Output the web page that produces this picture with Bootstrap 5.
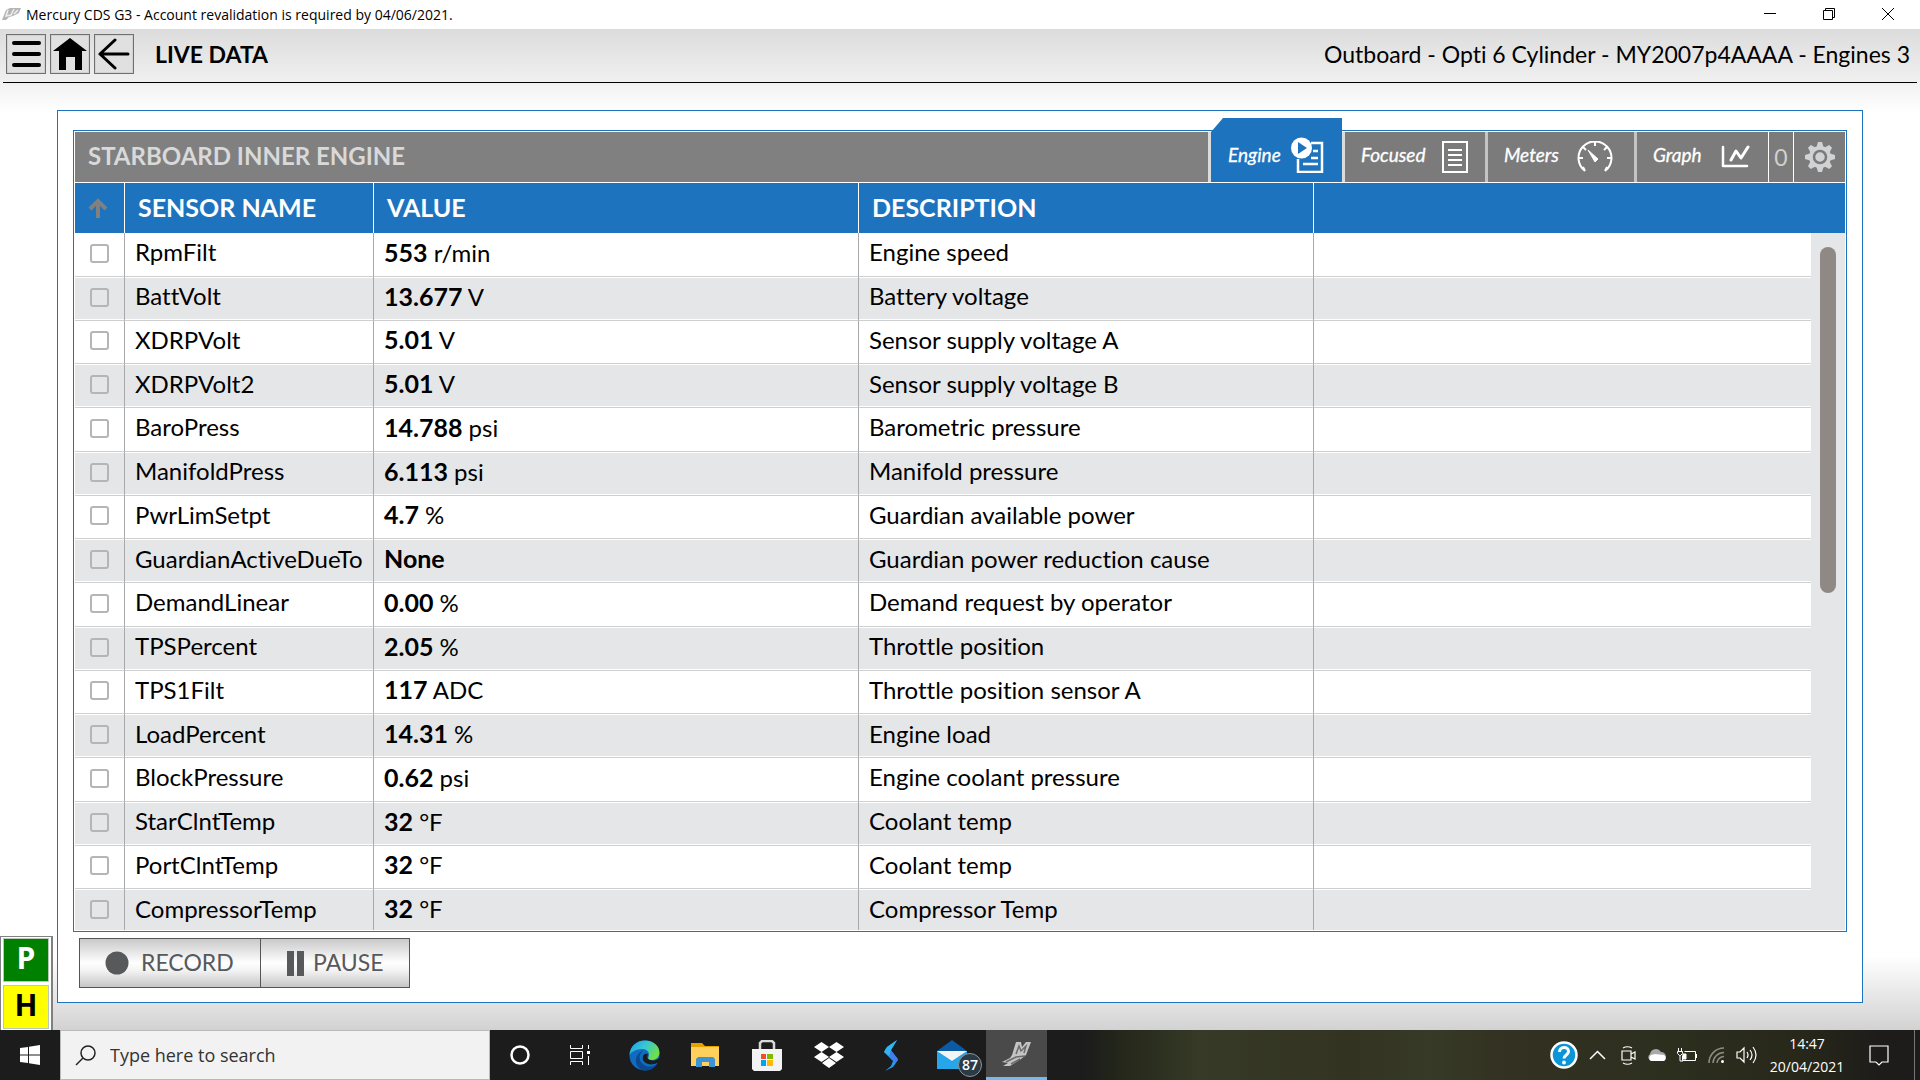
<!DOCTYPE html>
<html lang="en">
<head>
<meta charset="utf-8">
<meta name="viewport" content="width=device-width, initial-scale=1">
<title>Mercury CDS G3 - Live Data</title>
<link href="https://cdn.jsdelivr.net/npm/bootstrap@5.3.0/dist/css/bootstrap.min.css" rel="stylesheet">
<style>
:root{--blue:#1e73be;--bar:#7b7b7b;--segoe:"Open Sans","Noto Sans",sans-serif}
html,body{height:100%}
body{font-family:Lato,"Open Sans",sans-serif;font-size:24px;line-height:32px;color:#000;font-variant-ligatures:none;overflow:hidden}
button{font-family:inherit}
svg{display:block;flex:none}
.plain{border:0;background:none;padding:0;color:inherit}
.titlebar{height:29px;font:14px/29px var(--segoe);padding:0 3px 0 2px}
.titlebar .plain{width:59px;height:28px;display:flex;align-items:center;justify-content:center}
.stage{background:linear-gradient(#dcdcdc 0,#f0f0f0 53px,#fff 82px,#fff calc(100% - 74px),#d2d2d2 100%)}
.app-head{height:54px;font-size:23px;margin:0 3px;padding:0 7px 4px 3px;border-bottom:1px solid #000}
.app-head h1{font-size:23px;font-weight:700;line-height:32px;margin-left:21px}
.sq{width:40px;height:40px;border:1px solid #6f6f6f;background:#e0e0e0;box-shadow:inset 0 0 0 1px #d2d2d2;padding:0;display:flex;align-items:center;justify-content:center}
.outer{margin:27px 57px 27px;border:1px solid var(--blue);background:#fff;padding:19px 15px 14px}
.inner{border:1px solid var(--blue);padding:1px}
.engine-bar{height:51px;background:#808080;border-bottom:1px solid #fff}
.engine-bar h2{font-size:24px;font-weight:700;color:#d9d9d9;margin:0;padding:0 0 2px 13px}
.view-tab{height:50px;border:0;border-right:3px solid #c4c4c4;background:var(--bar);color:#fff;font-size:19px;font-style:italic;font-weight:400;display:flex;align-items:center;padding:0 0 5px 16px;-webkit-text-stroke:.3px #fff}
.view-tab svg{margin-top:4px}
.view-tab.on{height:64px;margin-top:-14px;background:var(--blue);border-right:0;clip-path:polygon(12px 0,100% 0,100% 100%,0 100%,0 14px);padding:9px 0 0 17px;width:131px}
.view-tab.on svg{margin:0 0 0 10px}
.edge{width:3px;background:#dcdcdc}
.count{width:26px;background:var(--bar);border-right:1px solid #fff;border-left:1px solid #fff;color:#d0d0d0;font-size:23px;margin-left:-3px}
.gear{width:51px;background:var(--bar);display:flex;align-items:center;justify-content:center}
.viewport{overflow:hidden;min-height:0}
.sensors{height:calc(100% + 3px);table-layout:fixed;width:100%;border-collapse:separate;border-spacing:0}
.sensors th{height:50px;background:var(--blue);color:#fff;font-size:25px;font-weight:700;padding:0 0 2px 13px;border-right:1px solid #fff}
.sensors td{padding:0 0 4px 10px;border-right:1px solid #a9a9a9;border-bottom:1px solid #cfcfcf;white-space:nowrap}
.sensors tr>:last-child{border-right:0}
.sensors tbody tr:nth-child(even) td{background:#e5e6e8;box-shadow:inset 0 1px #fff,inset 0 -1px #fff}
.sensors td b{font-size:25px}
.sensors td:first-child,.sensors th:first-child{padding-left:0}
.sensors td:first-child{padding-bottom:2px}
.sensors th:first-child svg{margin:2px auto 0 13px}
.tick{appearance:none;display:block;width:19px;height:19px;margin:0 0 0 15px;border:2px solid #b5b5b5;border-radius:3px;background:transparent}
.tick:checked{background:var(--blue)}
.track{flex:none;width:34px;background:#e5e6e8;border-top:50px solid var(--blue);padding:14px 9px 0 9px}
.thumb{height:346px;background:#8f8885;border-radius:8px}
.rec-bar{padding:6px 0 0 6px}
.rec{height:50px;border:1px solid #555;color:#58595b;font-size:23px;background:linear-gradient(#c9c9c9,#fff 50%,#f4f4f4 65%,#c6c6c6);display:flex;align-items:center;padding:0 0 2px}
.rec+.rec{margin-left:-1px}
.rec svg{margin-top:2px}
.gears{left:0;bottom:0;width:53px;height:94px;background:#fff;border:solid #808080;border-width:1px 2px 0 1px;padding:1px 2px 1px;font:700 30px/38px var(--segoe);gap:3px}
.gears div{flex:1;text-align:center;border:1px solid #b9c9b9}
.park{background:#008000;color:#fff}
.helm{background:#ff0}
.taskbar{height:50px;color:#fff;font-family:var(--segoe);background:linear-gradient(90deg,#1c1c1c 0,#1c1c1c 1085px,#24271a 1120px,#363a26 1200px,#333322 1350px,#363a26 1430px,#333122 1510px,#2d2f1f 1650px,#27281a 1800px,#1d1c1a 1880px)}
.taskbar .plain{height:50px;display:flex;align-items:center;justify-content:center}
.find{width:430px;background:#f2f2f2;border:1px solid #b9b9b9;padding-left:14px}
.find input{border:0;background:none;outline:0;color:#333;font-size:18px;line-height:24px;width:300px;padding:0;margin-left:14px}
.find input::placeholder{color:#333;opacity:1}
.taskbar .t60{width:60px}
.taskbar .t62{width:62px}
.taskbar .tile{width:61px;background:#4b4a4b;border-bottom:3px solid #76b9ed}
.bubble{right:0;top:23px;width:24px;height:24px;border-radius:12px;border:1px solid #8f9498;background:#2a3b46;font-size:14px;font-weight:600;line-height:21px;text-align:center}
.tray{gap:11px}
.clock{font-size:14px;line-height:23px;width:76px;text-align:center}
.taskbar .note{width:46px;margin-right:12px}
.peek{border-left:1px solid #777;width:6px}
</style>
<script src="https://cdn.jsdelivr.net/npm/bootstrap@5.3.0/dist/js/bootstrap.bundle.min.js"></script>
</head>
<body class="d-flex flex-column">

<header class="titlebar d-flex align-items-start bg-white">
  <svg class="mt-2" width="20" height="13" viewBox="0 0 20 13"><path d="M0 12 4 2 8 0h11l-2 5-6 3-4 1-3 3z" fill="#b5b5b5"/><path d="M6 2 4 8 9 7l3-6M12 6l4-4" stroke="#eee" fill="none" stroke-width="1.5"/></svg>
  <span class="ms-1">Mercury CDS G3 - Account revalidation is required by 04/06/2021.</span>
  <div class="d-flex ms-auto">
    <button class="plain" aria-label="Minimize"><svg width="12" height="12"><path d="M0 5.500h12" stroke="#000"/></svg></button>
    <button class="plain" aria-label="Restore"><svg width="12" height="12" fill="none" stroke="#000"><path d="M.5 2.500h9v9h-9zM2.500 2.500v-2h9v9h-2"/></svg></button>
    <button class="plain" aria-label="Close"><svg width="12" height="12" stroke="#000"><path d="M0 0l12 12M12 0 0 12"/></svg></button>
  </div>
</header>

<main class="stage flex-fill d-flex flex-column position-relative">
  <div class="app-head d-flex align-items-center">
    <div class="d-flex gap-1">
      <button class="sq" aria-label="Menu"><svg width="30" height="28" stroke="#000" stroke-width="4" stroke-linecap="round"><path d="M3 3h25M3 14h25M3 25h25"/></svg></button>
      <button class="sq" aria-label="Home"><svg width="36" height="34" viewBox="0 0 36 34"><path d="M18 1 35 14H30V33H23V20H14V33H7V14H1Z"/></svg></button>
      <button class="sq" aria-label="Back"><svg width="32" height="34" fill="none" stroke="#000" stroke-width="3" stroke-linecap="round" stroke-linejoin="round"><path d="M17 3 2 17 17 31M2 17h28"/></svg></button>
    </div>
    <h1 class="mb-0">LIVE DATA</h1>
    <span class="ms-auto">Outboard - Opti 6 Cylinder - MY2007p4AAAA - Engines 3</span>
  </div>

  <section class="outer flex-fill d-flex flex-column">
    <div class="inner flex-fill d-flex flex-column">
      <div class="engine-bar d-flex">
        <h2 class="flex-fill align-self-center">STARBOARD INNER ENGINE</h2>
        <span class="edge"></span>
        <button class="view-tab on">Engine
          <svg width="33" height="36" viewBox="0 0 33 36" fill="none"><path d="M20 6h11v29H7V22" stroke="#fff" stroke-width="2.500"/><path d="M22 14h5M20 21h7M12 27h15" stroke="#fff" stroke-width="2.500"/><circle cx="10.500" cy="11" r="10.500" fill="#fff"/><path d="M7 5v12l9-6z" fill="#1e73be"/></svg>
        </button>
        <span class="edge"></span>
        <button class="view-tab" style="width:143px">Focused
          <svg class="ms-3" width="26" height="32" fill="none" stroke="#fff" stroke-width="2"><path d="M1 1h24v30H1zM6 9h14M6 14h14M6 19h14M6 24h14"/></svg>
        </button>
        <button class="view-tab" style="width:149px">Meters
          <svg class="ms-3" width="40" height="32" viewBox="-1 0 40 32" fill="none" stroke="#fff" stroke-width="2"><path d="M9 30A16.500 16.500 0 1 1 29 30M19 1v4M7 6l3 3M31 6l-3 3M2 17h5M36 17h-5M9 30l-2-4M29 30l2-4"/><path d="M12 9 22 18 19 21Z" fill="#fff" stroke-width="1"/></svg>
        </button>
        <button class="view-tab" style="width:134px">Graph
          <svg class="ms-3" width="34" height="24" viewBox="-3 0 34 24" fill="none" stroke="#fff" stroke-width="3" stroke-linecap="round" stroke-linejoin="round"><path d="M2 2v19h24" stroke-width="2.500"/><path d="M10 15l5-9 5 7 7-11"/></svg>
        </button>
        <span class="count d-flex align-items-center justify-content-center">0</span>
        <button class="plain gear" aria-label="Settings"><svg width="32" height="32" viewBox="-16 -16 32 32"><g fill="#d0d2d3"><circle r="11"/><g id="teeth"><path d="M-3.500-10-2-15H2L3.500-10ZM-3.500 10-2 15H2L3.500 10ZM-10-3.500-15-2V2L-10 3.500ZM10-3.500 15-2V2L10 3.500Z"/></g><use href="#teeth" transform="rotate(45)"/></g><circle r="6" fill="none" stroke="#7b7b7b" stroke-width="2.500"/></svg></button>
      </div>
      <div class="viewport flex-fill d-flex">
        <div class="flex-fill h-100">
        <table class="sensors">
          <colgroup><col style="width:50px"><col style="width:249px"><col style="width:485px"><col style="width:455px"><col></colgroup>
          <thead><tr><th aria-label="Sort"><svg width="20" height="22" fill="none" stroke="#808080" stroke-width="4"><path d="M10 21V4M2 12l8-8 8 8"/></svg></th><th>SENSOR NAME</th><th>VALUE</th><th>DESCRIPTION</th><th></th></tr></thead>
          <tbody>
            <tr><td><input type="checkbox" class="tick" aria-label="RpmFilt"></td><td>RpmFilt</td><td><b>553</b> r/min</td><td>Engine speed</td><td></td></tr>
            <tr><td><input type="checkbox" class="tick" aria-label="BattVolt"></td><td>BattVolt</td><td><b>13.677</b> V</td><td>Battery voltage</td><td></td></tr>
            <tr><td><input type="checkbox" class="tick" aria-label="XDRPVolt"></td><td>XDRPVolt</td><td><b>5.01</b> V</td><td>Sensor supply voltage A</td><td></td></tr>
            <tr><td><input type="checkbox" class="tick" aria-label="XDRPVolt2"></td><td>XDRPVolt2</td><td><b>5.01</b> V</td><td>Sensor supply voltage B</td><td></td></tr>
            <tr><td><input type="checkbox" class="tick" aria-label="BaroPress"></td><td>BaroPress</td><td><b>14.788</b> psi</td><td>Barometric pressure</td><td></td></tr>
            <tr><td><input type="checkbox" class="tick" aria-label="ManifoldPress"></td><td>ManifoldPress</td><td><b>6.113</b> psi</td><td>Manifold pressure</td><td></td></tr>
            <tr><td><input type="checkbox" class="tick" aria-label="PwrLimSetpt"></td><td>PwrLimSetpt</td><td><b>4.7</b> %</td><td>Guardian available power</td><td></td></tr>
            <tr><td><input type="checkbox" class="tick" aria-label="GuardianActiveDueTo"></td><td>GuardianActiveDueTo</td><td><b>None</b></td><td>Guardian power reduction cause</td><td></td></tr>
            <tr><td><input type="checkbox" class="tick" aria-label="DemandLinear"></td><td>DemandLinear</td><td><b>0.00</b> %</td><td>Demand request by operator</td><td></td></tr>
            <tr><td><input type="checkbox" class="tick" aria-label="TPSPercent"></td><td>TPSPercent</td><td><b>2.05</b> %</td><td>Throttle position</td><td></td></tr>
            <tr><td><input type="checkbox" class="tick" aria-label="TPS1Filt"></td><td>TPS1Filt</td><td><b>117</b> ADC</td><td>Throttle position sensor A</td><td></td></tr>
            <tr><td><input type="checkbox" class="tick" aria-label="LoadPercent"></td><td>LoadPercent</td><td><b>14.31</b> %</td><td>Engine load</td><td></td></tr>
            <tr><td><input type="checkbox" class="tick" aria-label="BlockPressure"></td><td>BlockPressure</td><td><b>0.62</b> psi</td><td>Engine coolant pressure</td><td></td></tr>
            <tr><td><input type="checkbox" class="tick" aria-label="StarClntTemp"></td><td>StarClntTemp</td><td><b>32</b> °F</td><td>Coolant temp</td><td></td></tr>
            <tr><td><input type="checkbox" class="tick" aria-label="PortClntTemp"></td><td>PortClntTemp</td><td><b>32</b> °F</td><td>Coolant temp</td><td></td></tr>
            <tr><td><input type="checkbox" class="tick" aria-label="CompressorTemp"></td><td>CompressorTemp</td><td><b>32</b> °F</td><td>Compressor Temp</td><td></td></tr>
          </tbody>
        </table>
        </div>
        <div class="track"><div class="thumb"></div></div>
      </div>
    </div>
    <div class="rec-bar d-flex">
      <button class="rec" style="width:182px"><svg class="ms-4" width="25" height="24"><circle cx="13" cy="12" r="11.500" fill="#58595b"/></svg><span class="ms-2 ps-1">RECORD</span></button>
      <button class="rec" style="width:150px"><svg class="ms-4" width="20" height="25" fill="#58595b"><path d="M2 0h7v25H2zM12 0h7v25h-7z"/></svg><span class="ms-2">PAUSE</span></button>
    </div>
  </section>

  <aside class="gears position-absolute d-flex flex-column">
    <div class="park">P</div>
    <div class="helm">H</div>
  </aside>
</main>

<footer class="taskbar d-flex">
  <button class="plain t60" aria-label="Start"><svg width="20" height="20" fill="#fff"><path d="M0 3l8-1v7.500H0zM9 1.800 20 0v9.500H9zM0 10.500h8V18l-8-1zM9 10.500h11V20L9 18.200z"/></svg></button>
  <label class="find d-flex align-items-center"><svg width="21" height="21" fill="none" stroke="#222" stroke-width="1.500"><circle cx="13" cy="8" r="7"/><path d="M8 13 1 20"/></svg><input type="text" placeholder="Type here to search" aria-label="Search"></label>
  <button class="plain t60" aria-label="Cortana"><svg width="22" height="22"><circle cx="11" cy="11" r="8.500" fill="none" stroke="#fff" stroke-width="2.500"/></svg></button>
  <button class="plain t60" aria-label="Task view"><svg width="20" height="20" fill="none" stroke="#fff"><path d="M.5 0v3.500h12V0M.5 6.500h12v7H.5zM.5 20v-3.500h12V20M18.500 0v4M18.500 11v9"/><path d="M17 6h3v3h-3z" fill="#fff" stroke="none"/></svg></button>
  <button class="plain t60 ms-1" aria-label="Edge"><svg width="31" height="31" viewBox="0 0 31 31"><defs><linearGradient id="eg" x1="0" y1="0" x2="1" y2=".5"><stop offset="0" stop-color="#1b9de2"/><stop offset=".5" stop-color="#35c5d8"/><stop offset="1" stop-color="#6fe04a"/></linearGradient></defs><circle cx="15.500" cy="15.500" r="15" fill="#0f6cc0"/><path d="M.5 15C1 5 9 .5 16 .5c9 0 14.500 6 14.500 12 0 5-4 7.500-8 7.500-3 0-4-1-3-3 2-5-2-8-6-8C7 9 2 12 .5 15z" fill="url(#eg)"/><path d="M14 11c-5 3-5 12 3 15 4 1.500 8 0 11-2-3 5-8 7-13 6.500C8 29 5 22 8 16c1.500-3 4-4.500 6-5z" fill="#0b4a92"/><path d="M19 14c-4-1-6 2-5 6 2 4 8 6 14 3l3 0v-6c-2 3-6 4-10 3-3-1-3-3-2-6z" fill="#1c1c1c"/></svg></button>
  <button class="plain t62" aria-label="File Explorer"><svg width="29" height="24"><path d="M0 0h11l3 3h14v20H0z" fill="#e6a100"/><path d="M0 4h28v19H0z" fill="#ffd05b"/><path d="M5 24v-8l2-2h15l2 2v8h-6v-5h-7v5z" fill="#3b93d8"/></svg></button>
  <button class="plain t62" aria-label="Microsoft Store"><svg width="30" height="31"><path d="M8 10V3l2-2h10l2 2v7" fill="none" stroke="#d8d8d8" stroke-width="2.500"/><path d="M0 9h30v20l-2 2H2l-2-2z" fill="#f3f3f3"/><path d="M9 14h5v5H9z" fill="#f25022"/><path d="M15 14h6v5h-6z" fill="#7fba00"/><path d="M9 20h5v6H9z" fill="#00a4ef"/><path d="M15 20h6v6h-6z" fill="#ffb900"/></svg></button>
  <button class="plain t62" aria-label="Dropbox"><svg width="30" height="26" fill="#fff"><path d="M7.500 0 15 5l-7.500 5L0 5zM22.500 0 30 5l-7.500 5L15 5zM7.500 10 15 15l-7.500 5L0 15zM22.500 10 30 15l-7.500 5L15 15zM15 16l7 5-7 5-7-5z"/></svg></button>
  <button class="plain t62" aria-label="Streaks"><svg width="16" height="31"><path d="M14 0 4 7 1 12l9 9-2 5-6 5 8-4 5-7-7-10z" fill="#249ae8"/><path d="M2 9l4-1 9 11-3 4z" fill="#3f7df0"/><path d="M14 0 4 7l-3 5 5 4 2-6z" fill="#2fb6f3"/></svg></button>
  <button class="plain t60 position-relative" aria-label="Mail"><svg width="31" height="30"><path d="M0 11 15 0l15 11v18H0z" fill="#0c59a4"/><path d="M0 11h30v18H0z" fill="#1fa2e6"/><path d="M0 11h30L15 21z" fill="#f4f4f4"/><path d="M0 12l15 10 15-10v17H0z" fill="#27a7ea"/></svg><span class="bubble position-absolute">87</span></button>
  <button class="plain tile ms-1" aria-label="Mercury CDS G3"><svg width="30" height="24"><path d="M10 13 14 0h5l1 5 4-5h5l-5 13-5 4-11 7H1l5-3-6-1 8-4z" fill="#c4c4c4"/><path d="M14 12l3-8 2 5 5-5-2 7M4 20l10-5 9-1M9 22l9-5" fill="none" stroke="#6b6b6b" stroke-width="1.500"/></svg></button>
  <div class="tray d-flex ms-auto align-items-center">
    <svg width="28" height="28" viewBox="0 0 28 28"><circle cx="14" cy="14" r="12.500" fill="#0a95d8" stroke="#fff" stroke-width="2.500"/><path d="M9.500 11c0-6 9-6 9-.5 0 3.500-4.500 3.500-4.500 7" fill="none" stroke="#fff" stroke-width="3"/><circle cx="14" cy="21.500" r="1.900" fill="#fff"/></svg>
    <svg class="me-1" width="17" height="10" fill="none" stroke="#fff" stroke-width="1.500"><path d="M1 9l7.500-7.500L16 9"/></svg>
    <svg width="15" height="19" fill="none" stroke="#fff" stroke-width="1.200"><path d="M1 5h9v9H1zM10 8l4-2v7l-4-2M2 2q4.500-2.500 9 0M2 17q4.500 2.500 9 0"/></svg>
    <svg width="19" height="14"><path d="M4 13a4 4 0 0 1-1-7 6 6 0 0 1 11-2 5 5 0 0 1 3 9z" fill="#aaa"/><path d="M4 13a3.500 3.500 0 0 1 0-6l4-1 9 1a3.500 3.500 0 0 1 0 6z" fill="#fff"/></svg>
    <svg width="20" height="15" fill="none" stroke="#fff"><path d="M7.500 3.500h11v9h-13v-5M19.500 6v4M1.500 0v3M4.500 0v3M.5 3.500h5v2l-2 2h-1l-2-2zM3 7v6h3"/><path d="M6 6h3v5H6z" fill="#fff"/></svg>
    <svg width="17" height="17" fill="none" stroke="#8d8e85" stroke-width="1.500"><path d="M1 16A15 15 0 0 1 16 1M5 16A11 11 0 0 1 16 5.500M9 16a7 7 0 0 1 7-6.500"/><circle cx="14.500" cy="14.500" r="1.500" fill="#fff" stroke="none"/></svg>
    <svg width="22" height="18" fill="none" stroke="#fff" stroke-width="1.200"><path d="M1 6h3l4-4v14l-4-4H1zM11 6q2 3 0 6M14 4q4 5 0 10M17 1q6 8 0 16"/></svg>
    <div class="clock">14:47<br>20/04/2021</div>
    <button class="plain note" aria-label="Notifications"><svg width="20" height="21" fill="none" stroke="#fff" stroke-width="1.200"><path d="M1 1h18v16h-6l-3 3-3-3H1z"/></svg></button>
  </div>
  <div class="peek"></div>
</footer>
</body>
</html>
